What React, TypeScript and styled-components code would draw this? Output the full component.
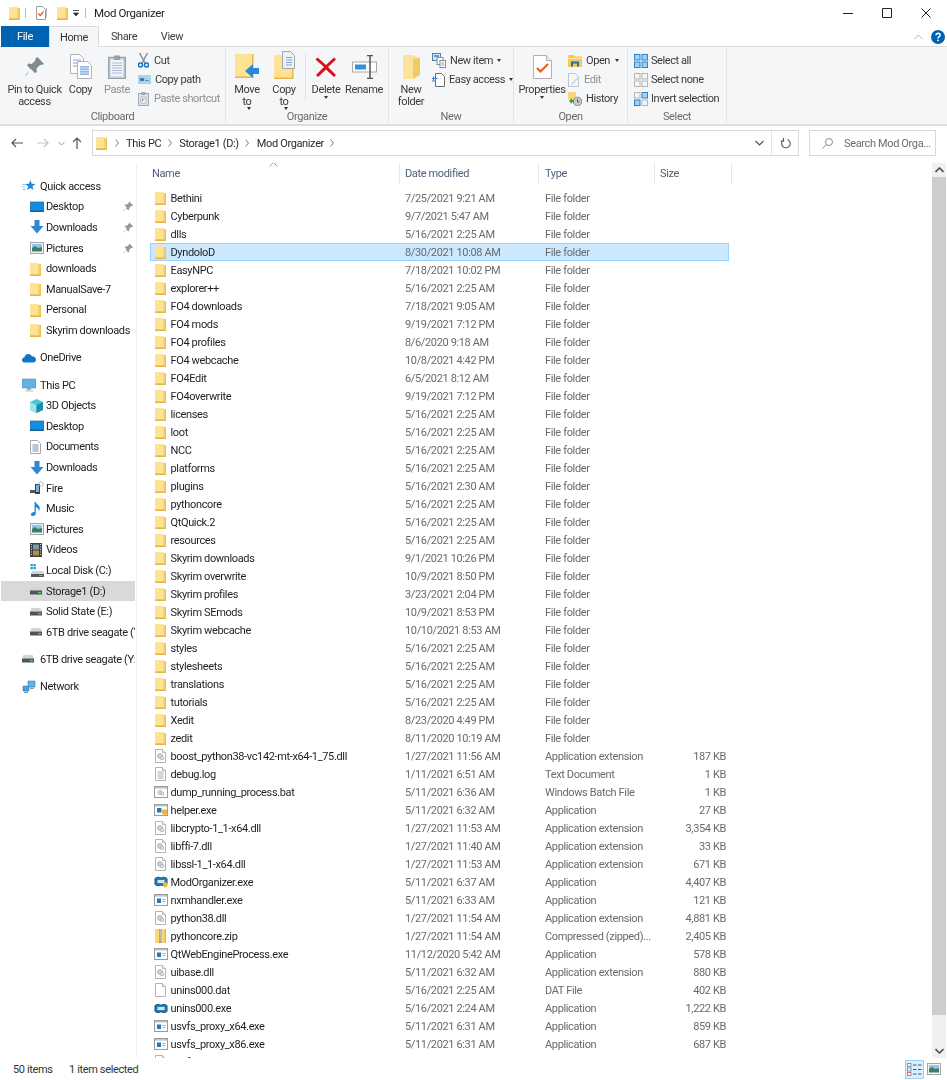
import React from "react";
import styled, { createGlobalStyle } from "styled-components";

const Global = createGlobalStyle`
  html, body { margin: 0; padding: 0; background: #fff; overflow: hidden; }
  body { font-family: Roboto, "Liberation Sans", sans-serif; font-size: 11px; color: #1f1f1f; }
  svg { display: block; flex: none; }
`;

const Window = styled.div`
  width: 947px; height: 1080px; display: flex; flex-direction: column; overflow: hidden;
  filter: blur(0.4px);
  letter-spacing: -0.36px;
  white-space: nowrap;
`;

/* title bar */
const TitleBar = styled.div`
  height: 26px; display: flex; align-items: center; padding: 0 2px 0 9px; flex: none;
`;
const QuickSep = styled.div`
  width: 1px; height: 10px; background: #bdbdbd; margin: 0 10px 0 ${p => p.$left ?? 7}px;
`;
const TitleText = styled.span` margin-left: 2px; font-size: 11.5px; color: #222; flex: 1; `;
const WinControls = styled.div` display: flex; align-items: center; `;
const WinButton = styled.div`
  width: 39px; height: 26px; display: flex; align-items: center; justify-content: center;
`;

/* tabs */
const TabStrip = styled.div`
  height: 21px; display: flex; align-items: stretch; flex: none; padding-left: 1px; position: relative; z-index: 1;
`;
const FileTab = styled.div`
  width: 48px; background: #0063b1; color: #fff; display: flex; align-items: center; justify-content: center; font-size: 11px;
`;
const Tab = styled.div`
  width: ${p => p.$w}px; display: flex; align-items: center; justify-content: center; font-size: 11px; color: #3c3c3c;
  ${p => p.$active && `
    background: #f5f6f7; border: 1px solid #dadbdc; border-bottom: none; box-sizing: border-box; color: #333;
  `}
`;
const TabRight = styled.div`
  margin-left: auto; display: flex; align-items: center; gap: 8px; padding-right: 2px;
`;

/* ribbon */
const Ribbon = styled.div`
  background: #f5f6f7; border-top: 1px solid #dadbdc; border-bottom: 2px solid #dcdddf; display: flex; flex: none; margin-top: -1px; height: 77px;
`;
const Group = styled.div`
  width: ${p => p.$w}px; box-sizing: border-box; border-right: 1px solid #e3e4e6; margin: 1px 0; padding-top: 1px; display: flex; flex-direction: column;
`;
const GroupBody = styled.div`
  height: 61px; flex: none; display: flex; padding-left: ${p => p.$pad ?? 0}px;
`;
const GroupLabel = styled.div`
  height: 13px; text-align: center; color: #6a6a6a; font-size: 11px; line-height: 13px;
`;
const BigButton = styled.div`
  width: ${p => p.$w}px; display: flex; flex-direction: column; align-items: center; flex: none;
  color: ${p => (p.$dim ? "#8f8f8f" : "#3a3a3a")}; font-size: 11px; line-height: 11.5px; text-align: center;
`;
const BigIcon = styled.div`
  height: 35px; display: flex; align-items: center; justify-content: center;
`;
const Caret = styled.span`
  display: inline-block; width: 0; height: 0; border: 2.5px solid transparent; border-top: 3px solid #333; border-bottom: 0; margin-left: ${p => p.$gap ?? 3}px; vertical-align: 2px;
`;
const VDivider = styled.div`
  width: 1px; height: 46px; background: #e0e1e3; margin: 5px 6px 0 2px; flex: none;
`;
const SmallStack = styled.div`
  display: flex; flex-direction: column; margin-left: ${p => p.$left ?? 0}px; padding-top: 2px;
`;
const SmallButton = styled.div`
  height: 19px; display: flex; align-items: center; gap: ${p => p.$gap ?? 4}px; font-size: 11px; letter-spacing: -0.42px;
  color: ${p => (p.$dim ? "#8f8f8f" : "#3a3a3a")};
`;

/* address row */
const NavBar = styled.div`
  height: 37px; display: flex; align-items: flex-start; flex: none; box-sizing: border-box; padding-top: 4px;
`;
const NavArrows = styled.div`
  width: 92px; height: 26px; display: flex; align-items: center; flex: none; padding-left: 11px; box-sizing: border-box;
`;
const AddressBox = styled.div`
  width: 707px; height: 26px; box-sizing: border-box; border: 1px solid #d9d9d9; display: flex; align-items: center; padding-left: 3px; flex: none;
`;
const Crumb = styled.span` color: #2a2a2a; font-size: 11px; margin: 0 6.5px; `;
const CrumbArrow = styled.div` margin-left: ${p => p.$left ?? 0}px; `;
const AddressEnd = styled.div` margin-left: auto; display: flex; align-items: center; height: 100%; `;
const RefreshCell = styled.div`
  width: 26px; height: 100%; border-left: 1px solid #e3e3e3; display: flex; align-items: center; justify-content: center; margin-left: 7px;
`;
const SearchBox = styled.div`
  width: 127px; height: 26px; box-sizing: border-box; border: 1px solid #d9d9d9; margin-left: 10px; display: flex; align-items: center; padding-left: 12px; gap: 11px; color: #6d6d6d; font-size: 11px; overflow: hidden; flex: none;
`;

/* body */
const Body = styled.div`
  flex: 1; min-height: 0; display: flex; overflow: hidden;
`;
const Sidebar = styled.div`
  width: 137px; box-sizing: border-box; border-right: 1px solid #f0f0f0; padding-top: 13px; overflow: hidden; flex: none;
`;
const NavItem = styled.div`
  height: 20.6px; display: flex; align-items: center; box-sizing: border-box; overflow: hidden;
  padding-left: ${p => (p.$top ? 21 : 29)}px; margin-left: 1px; width: 134px;
  margin-top: ${p => p.$gap ?? 0}px; color: #222; font-size: 11px;
  background: ${p => (p.$selected ? "#d9d9d9" : "transparent")};
`;
const NavIcon = styled.div`
  width: ${p => (p.$top ? 18 : 16)}px; display: flex; justify-content: flex-start; flex: none;
`;
const PinSlot = styled.div` margin-left: auto; padding-right: 1px; `;
const Main = styled.div` flex: 1; min-width: 0; position: relative; overflow: hidden; height: 895px; `;
const Header = styled.div`
  height: 21px; margin-left: 10px; display: grid; grid-template-columns: 253px 139px 116px 77px; width: 585px; color: #4c607a; font-size: 11px;
`;
const HeaderCell = styled.div`
  border-right: 1px solid #e8e8e8; padding-left: ${p => p.$pad ?? 5}px; display: flex; align-items: center; height: 21px;
`;
const SortMark = styled.div` position: absolute; left: 132px; top: -1px; `;
const Rows = styled.div` padding: 5px 0 0 13px; `;
const Row = styled.div`
  width: 579px; height: 18px; box-sizing: border-box; display: grid; grid-template-columns: 250px 139px 116px 74px; align-items: center; font-size: 11px; color: #6a6a6a;
  ${p => p.$selected && "background: #cce8ff; box-shadow: inset 0 0 0 1px #99d1ff;"}
`;
const NameCell = styled.div`
  display: flex; align-items: center; color: #1f1f1f; padding-left: 5px;
`;
const NameIconSlot = styled.div` width: 15.5px; display: flex; justify-content: flex-start; flex: none; `;
const DateCell = styled.div` padding-left: 5px; `;
const TypeCell = styled.div` padding-left: 6px; overflow: hidden; `;
const SizeCell = styled.div` text-align: right; padding-right: 3px; `;

const Scrollbar = styled.div`
  width: 14px; margin-right: 1px; background: #f0f0f0; height: 895px; display: flex; flex-direction: column; flex: none;
`;
const ScrollArrow = styled.div` height: 14px; display: flex; align-items: center; justify-content: center; flex: none; `;
const ScrollTrack = styled.div` flex: 1; `;
const ScrollThumb = styled.div` height: 838px; background: #cdcdcd; `;

const StatusBar = styled.div`
  height: 22px; flex: none; display: flex; align-items: center; font-size: 11px; color: #333; padding-left: 13px; margin-top: -2px; background: #fff; position: relative;
`;
const StatusCount = styled.span` width: 56px; `;
const ViewButtons = styled.div` margin-left: auto; display: flex; align-items: center; padding-right: 4px; `;
const ViewButton = styled.div`
  width: 19px; height: 19px; box-sizing: border-box; display: flex; align-items: center; justify-content: center;
  ${p => p.$on && "background: #d9efff; border: 1px solid #99d1ff;"}
`;

const WideSvg = styled.svg` margin-left: -1px; `;

/* icons */
const Folder = ({ w = 11, h = 14 }: { w?: number; h?: number }) => (
  <svg width={w} height={h} viewBox="0 0 11 14">
    <path d="M0 1h7.5l1 1H11v12H0z" fill="#f0c35a" />
    <path d="M0 1h8.5v11.5H0z" fill="#ffe394" />
    <path d="M0 12.5h11V14H0z" fill="#e9b646" />
    <path d="M9 2v10.5" stroke="#f7d57a" strokeWidth="1" />
  </svg>
);
const FileBase = ({ children, fold = true }: { children?: React.ReactNode; fold?: boolean }) => (
  <svg width="11" height="14" viewBox="0 0 11 14">
    <path d="M.5.5h7l3 3v10H.5z" fill="#fff" stroke="#b4b4b4" />
    {fold && <path d="M7.5.5v3h3" fill="#eee" stroke="#b4b4b4" />}
    {children}
  </svg>
);
const Dll = () => (
  <FileBase>
    <circle cx="5" cy="7" r="2.4" fill="#cfd6dc" stroke="#98a2ab" strokeWidth=".8" />
    <circle cx="7" cy="9" r="1.7" fill="#e2e6e9" stroke="#98a2ab" strokeWidth=".7" />
  </FileBase>
);
const Log = () => (
  <FileBase>
    <path d="M2.5 5h6M2.5 7h6M2.5 9h6M2.5 11h6" stroke="#a5a5a5" strokeWidth=".9" />
  </FileBase>
);
const Blank = () => <FileBase />;
const ExeBox = ({ children }: { children?: React.ReactNode }) => (
  <WideSvg width="14" height="12" viewBox="0 0 14 12">
    <rect x=".5" y=".5" width="13" height="11" fill="#fff" stroke="#9a9a9a" />
    <path d="M1 1h12v1.6H1z" fill="#c5c5c5" />
    {children}
  </WideSvg>
);
const Exe = () => (
  <ExeBox>
    <rect x="3" y="4.5" width="4" height="4.5" fill="#1e78d2" />
    <path d="M8.5 5.5h3M8.5 7.5h3" stroke="#aaa" />
  </ExeBox>
);
const Bat = () => (
  <ExeBox>
    <circle cx="6" cy="6.5" r="2" fill="#d5dade" stroke="#9aa5ad" strokeWidth=".7" />
    <circle cx="8.5" cy="7.6" r="1.5" fill="#e5e8ea" stroke="#9aa5ad" strokeWidth=".7" />
  </ExeBox>
);
const HelperExe = () => (
  <ExeBox>
    <rect x="3" y="4" width="4.5" height="4.5" fill="#1e78d2" />
    <path d="M8 6l2.5-1L13 6v2.5c0 1.5-1.2 2.7-2.5 3.2C9.2 11.200 8 10 8 8.500z" fill="#f2b632" />
  </ExeBox>
);
const ModOrg = () => (
  <WideSvg width="14" height="12" viewBox="0 0 14 12">
    <path d="M1 2.5c2-1.600 4-1.600 6-.5 2-1.100 4-1.100 6 .5v6c-2 1.500-4 1.500-6 .5-2 1-4 1-6-.5z" fill="#1f7fbb" stroke="#1b4f72" strokeWidth="1" />
    <path d="M3.500 4h7v3h-7z" fill="#cfe8f7" />
    <path d="M9 7l2-1 2.500 1v2c0 1.300-1.200 2.300-2.300 2.700C10 11.300 9 10.300 9 9z" fill="#f2b632" />
  </WideSvg>
);
const UninsExe = () => (
  <WideSvg width="14" height="9" viewBox="0 0 14 9">
    <path d="M1 1.500c2-1.300 4-1.300 6-.3 2-1 4-1 6 .3v6c-2 1.300-4 1.300-6 .3-2 1-4 1-6-.3z" fill="#1f7fbb" stroke="#1b4f72" strokeWidth="1" />
    <path d="M3.500 3h7v3h-7z" fill="#cfe8f7" />
  </WideSvg>
);
const Zip = () => (
  <svg width="11" height="14" viewBox="0 0 11 14">
    <path d="M0 0h11v14H0z" fill="#fbd976" />
    <path d="M9.500 0H11v14H9.500z" fill="#e9b646" />
    <path d="M4 0h2.500v14H4z" fill="#9d9d8a" />
    <path d="M4.600 1h1.300M4.600 3h1.300M4.600 5h1.300M4.600 7h1.300M4.600 9h1.300M4.600 11h1.300" stroke="#e8e8dc" />
  </svg>
);

const SmallPin = () => (
  <svg width="11" height="11" viewBox="0 0 11 11">
    <path d="M6.500.8l3.700 3.700-1.200.6-.9-.2-2 2 .1 1.700-.9.8-2.200-2.200L.6 10.400.300 10.100l3.400-3.600L1.600 4.300l.8-.9 1.700.1 2-2-.2-.9z" fill="#8e9aa3" />
  </svg>
);
const Star = () => (
  <svg width="14" height="14" viewBox="0 0 14 14">
    <path d="M8.500 1l1.200 3.700 3.800.2-3 2.400 1 3.700L8.300 9l-3.200 2 1-3.700-3-2.400 3.900-.2z" fill="#1f89d8" />
    <path d="M.5 5.500h3M0 8h3M1 10.500h2.500" stroke="#8ec6ee" />
  </svg>
);
const Desktop = () => (
  <svg width="14" height="12" viewBox="0 0 14 12">
    <rect x="0" y="1" width="14" height="9.500" fill="#0f8fe0" />
    <rect x="0" y="1" width="14" height="9.500" fill="none" stroke="#3f5f78" strokeWidth=".7" />
    <path d="M0 9.500h14v1.500H0z" fill="#1d5f8e" />
  </svg>
);
const Download = () => (
  <svg width="14" height="14" viewBox="0 0 14 14">
    <path d="M4.500 0h5v6h4L7 13.500.500 6h4z" fill="#2f86d6" />
  </svg>
);
const Pictures = () => (
  <svg width="14" height="12" viewBox="0 0 14 12">
    <rect x=".5" y=".5" width="13" height="11" fill="#f4f4f4" stroke="#a5a5a5" />
    <path d="M2 2h10v4H2z" fill="#8fc7ea" />
    <path d="M2 6l3-2 3 2 4-1v4.500H2z" fill="#3f7d6a" />
  </svg>
);
const OneDrive = () => (
  <svg width="14" height="10" viewBox="0 0 14 10">
    <path d="M3 9.500C1 9.500 0 8.200 0 6.900c0-1.400 1-2.400 2.300-2.500C2.900 2.200 4.500 1 6.300 1c1.600 0 2.900.9 3.500 2.300 2.300-.1 4.200 1.400 4.200 3.400 0 1.600-1.200 2.800-2.900 2.800z" fill="#1276c4" />
  </svg>
);
const Pc = () => (
  <svg width="14" height="14" viewBox="0 0 14 14">
    <rect x="0" y="1" width="14" height="9" fill="#5db4e6" stroke="#7a8a96" strokeWidth=".6" />
    <path d="M5 10h4v2H5z" fill="#9aa5ad" />
    <path d="M3 12.500h8V13.500H3z" fill="#b5bcc2" />
  </svg>
);
const Cube = () => (
  <svg width="13" height="14" viewBox="0 0 13 14">
    <path d="M6.500 0L13 3v8l-6.500 3L0 11V3z" fill="#4bc3d9" />
    <path d="M6.500 6v8L0 11V3z" fill="#9fe3ea" />
    <path d="M6.500 6L13 3v8l-6.500 3z" fill="#1b8fa8" />
  </svg>
);
const Documents = () => (
  <svg width="11" height="14" viewBox="0 0 11 14">
    <path d="M.5.500h7l3 3v10H.5z" fill="#fff" stroke="#a8a8a8" />
    <path d="M2.500 5h6M2.500 7h6M2.500 9h6M2.500 11h6" stroke="#6f8fb0" />
  </svg>
);
const Phone = () => (
  <svg width="14" height="14" viewBox="0 0 14 14">
    <path d="M5 3h5v10H5z" fill="#3b3f44" />
    <path d="M6 4h3v7H6z" fill="#6fb2e2" />
    <path d="M0 9h5v3H0z" fill="#555" />
    <circle cx="11" cy="3" r="2.300" fill="none" stroke="#aaa" strokeWidth=".8" />
  </svg>
);
const Music = () => (
  <svg width="12" height="14" viewBox="0 0 12 14">
    <path d="M4.500 0h1.300c.4 2.400 4 3 4 6.500 0 1.200-.5 2-1 2.700.2-2-1-3.400-3-3.900V11.500c0 1.400-1.400 2.500-3 2.500S1 13.200 1 12.200c0-1.200 1.400-2.200 3-2.200.2 0 .4 0 .5.100z" fill="#1d8ae0" />
  </svg>
);
const Video = () => (
  <svg width="12" height="14" viewBox="0 0 12 14">
    <rect width="12" height="14" fill="#3d4044" />
    <path d="M3 1.500h6v5H3z" fill="#7b9cb5" />
    <path d="M3 7.500h6v5H3z" fill="#b0903a" />
    <path d="M1 1.500h1M1 4h1M1 6.500h1M1 9h1M1 11.500h1M10 1.500h1M10 4h1M10 6.500h1M10 9h1M10 11.500h1" stroke="#ddd" />
  </svg>
);
const DiskC = () => (
  <svg width="14" height="13" viewBox="0 0 14 13">
    <path d="M.500 0h2.300v2.300H.500zM3.500 0h2.300v2.300H3.500zM.500 3h2.300v2.300H.500zM3.500 3h2.300v2.300H3.500z" fill="#1d9bd8" />
    <path d="M2 7h11l1 3H1z" fill="#cfd3d6" />
    <path d="M1 10h13v3H1z" fill="#50565b" />
    <path d="M9 11h3.500v1H9z" fill="#5ecb5e" />
  </svg>
);
const Disk = ({ w = 12 }: { w?: number }) => (
  <svg width={w} height="8" viewBox="0 0 12 8">
    <path d="M1.500 0h9L12 3.500H0z" fill="#d2d5d8" />
    <path d="M0 3.500h12V7.500H0z" fill="#4f555a" />
    <path d="M8 5h3v1.200H8z" fill="#5ecb5e" />
  </svg>
);
const Network = () => (
  <svg width="14" height="14" viewBox="0 0 14 14">
    <path d="M1 6h6v5H1z" fill="#4aa3e0" stroke="#2f6e9e" strokeWidth=".5" />
    <path d="M2 11.500h4v1.500H2z" fill="#8d989f" />
    <path d="M6 1h7v6H6z" fill="#5db4e6" stroke="#2f6e9e" strokeWidth=".5" />
    <path d="M8 7.500h4V9H8z" fill="#8d989f" />
  </svg>
);

/* ribbon icons */
const RibbonPin = () => (
  <svg width="20" height="21" viewBox="0 0 20 21">
    <path d="M12.500 1L19 8l-2.300 1.100-1.500-.3-3.700 3.700.3 3.200-1.600 1.500L6 13 1 19.500l-.6-.6L6 13.500 2 9.200l1.500-1.600 3.300.3L10.500 4.200l-.2-1.600z" fill="#7f8a93" />
  </svg>
);
const RibbonCopy = () => (
  <svg width="22" height="25" viewBox="0 0 22 25">
    <path d="M.5.500h9l4 4v15H.500z" fill="#fdfdfd" stroke="#b2b2b2" />
    <path d="M3 6h8M3 9h8M3 12h8" stroke="#7fa6d4" />
    <path d="M7.500 7.500h10l4 4v13h-14z" fill="#fff" stroke="#b2b2b2" />
    <path d="M10 12h9v9h-9z" fill="#8fb4e8" />
    <path d="M10 14h9M10 16.500h9M10 19h9" stroke="#fff" strokeWidth=".7" />
  </svg>
);
const RibbonPaste = () => (
  <svg width="18" height="24" viewBox="0 0 18 24">
    <rect x=".7" y="2.500" width="16.600" height="21" fill="#d3dbe3" stroke="#96a0aa" strokeWidth="1.400" />
    <rect x="3" y="5" width="12" height="16" fill="#f3f5f8" />
    <path d="M4 8h10M4 10.500h10M4 13h10M4 15.500h10M4 18h10" stroke="#a7bbd6" />
    <path d="M6 .5h6V5H6z" fill="#96a0aa" />
  </svg>
);
const Cut = () => (
  <svg width="11" height="15" viewBox="0 0 11 15">
    <path d="M1.500 0L7 10M9.500 0L4 10" stroke="#8a8f94" strokeWidth="1.500" fill="none" />
    <circle cx="2.500" cy="12" r="2" fill="none" stroke="#1672c0" strokeWidth="1.500" />
    <circle cx="8.500" cy="12" r="2" fill="none" stroke="#1672c0" strokeWidth="1.500" />
  </svg>
);
const CopyPath = () => (
  <svg width="13" height="9" viewBox="0 0 13 9">
    <rect width="13" height="9" fill="#a8d4f2" />
    <path d="M2 3l1 3 1-3 1 3 1-3" fill="none" stroke="#2b4f6e" strokeWidth=".8" />
    <path d="M7.500 5.500h4" stroke="#2b4f6e" strokeDasharray="1 1" />
  </svg>
);
const PasteShortcut = () => (
  <svg width="11" height="14" viewBox="0 0 11 14">
    <rect x=".5" y="1.500" width="10" height="12" fill="#dfe4ea" stroke="#a0a9b2" />
    <path d="M3.500 0h4v3h-4z" fill="#a0a9b2" />
    <rect x="3" y="5" width="5" height="6" fill="#fff" stroke="#8a98a6" strokeWidth=".6" />
    <path d="M4.500 9.500V7h2M6.500 7L5 8.500" fill="none" stroke="#5d7ea0" strokeWidth=".7" />
  </svg>
);
const MoveTo = () => (
  <svg width="24" height="28" viewBox="0 0 24 28">
    <path d="M0 1h18v24H0z" fill="#ffe394" />
    <path d="M17 1h1.500v24H0v-1.500h17z" fill="#e9b646" />
    <path d="M10 18l8-7v4h6v6h-6v4z" fill="#2f86d6" />
  </svg>
);
const CopyTo = () => (
  <svg width="21" height="31" viewBox="0 0 21 31">
    <path d="M0 4h19v24H0z" fill="#ffe394" />
    <path d="M18 4h1.500v24H0v-1.500h18z" fill="#e9b646" />
    <path d="M8.500.5h8l4 4v13h-12z" fill="#eef1f4" stroke="#a5a5a5" />
    <path d="M12 6.500h6M12 9h6M12 11.500h6M12 14h6" fill="none" stroke="#7fa6d4" />
  </svg>
);
const Delete = () => (
  <svg width="22" height="22" viewBox="0 0 22 22">
    <path d="M2.500 1.500L11 9l8-7.500 2 2L13 11l8 8-2 2-8-7.500L3 21l-2-2 8-8L.500 3.500z" fill="#d90f1e" />
  </svg>
);
const Rename = () => (
  <svg width="25" height="24" viewBox="0 0 25 24">
    <rect x=".5" y="7" width="24" height="10" fill="#fdfdfd" stroke="#a8a8a8" />
    <rect x="3" y="9.500" width="11" height="5" fill="#2f8fe0" />
    <path d="M15 .7h6M15 23.300h6" fill="none" stroke="#555" strokeWidth="1.200" />
    <path d="M18 1v22" stroke="#555" strokeWidth="1.500" />
  </svg>
);
const NewFolder = () => (
  <svg width="17" height="24" viewBox="0 0 17 24">
    <path d="M0 0h10l7 3v17l-7 4H0z" fill="#fce29a" />
    <path d="M10 4l7-1v17l-7 4z" fill="#f1c969" />
  </svg>
);
const NewItem = () => (
  <svg width="14" height="15" viewBox="0 0 14 15">
    <rect x=".5" y=".5" width="8" height="7" fill="#d9ebf8" stroke="#5a7f9e" />
    <path d="M2 3h5" stroke="#2f86d6" strokeWidth="1.500" />
    <rect x="5" y="4.500" width="6" height="7" fill="#fff" stroke="#8a8a8a" />
    <rect x="8" y="7.500" width="5.500" height="7" fill="#fff" stroke="#8a8a8a" />
    <path d="M9.500 10h2.500M9.500 12h2.500" stroke="#6f8fb0" />
  </svg>
);
const EasyAccess = () => (
  <svg width="13" height="14" viewBox="0 0 13 14">
    <path d="M3.500.500h6l3 3v10h-9z" fill="#fff" stroke="#6a6a6a" />
    <path d="M0 5.500h5.500M1.500 3.500v4M0 8h3.500" stroke="#2f86d6" strokeWidth="1" fill="none" />
  </svg>
);
const Properties = () => (
  <svg width="19" height="24" viewBox="0 0 19 24">
    <path d="M.5.500h13l5 5v18H.500z" fill="#fdfdfd" stroke="#b0b0b0" />
    <path d="M13.500.500v5h5" fill="#eee" stroke="#b0b0b0" />
    <path d="M4 13l3.500 3.500L15 9" fill="none" stroke="#e8591f" strokeWidth="2" />
  </svg>
);
const OpenIcon = () => (
  <svg width="14" height="12" viewBox="0 0 14 12">
    <path d="M0 0h6l1 1.500h7V12H0z" fill="#f8c94f" />
    <path d="M0 3h14v1H0z" fill="#fdeab0" />
    <path d="M3 11.500V6.500h8V11.500H9V8.500H5V11.500z" fill="#1672c0" />
  </svg>
);
const Edit = () => (
  <svg width="12" height="14" viewBox="0 0 12 14">
    <path d="M.5.500h7l3 3v10H.500z" fill="#f6f7f9" stroke="#b9c5d2" />
    <path d="M3 11l6.500-7 1 1-6 7z" fill="#c9d7e6" />
  </svg>
);
const History = () => (
  <svg width="14" height="14" viewBox="0 0 14 14">
    <path d="M0 0h8v8H0z" fill="#f8d874" />
    <circle cx="9.500" cy="9.500" r="4.300" fill="#c9c9c9" stroke="#777" strokeWidth=".8" />
    <path d="M9.500 7v3h2" fill="none" stroke="#444" strokeWidth=".8" />
    <path d="M1 9l3-3v2h2v2H4v2z" fill="#37a13a" />
  </svg>
);
const Tiles = ({ on }: { on: boolean[] }) => (
  <svg width="14" height="14" viewBox="0 0 14 14">
    {[[0, 0], [7.5, 0], [0, 7.500], [7.500, 7.500]].map(([x, y], i) => (
      <rect
        key={i}
        x={x + 0.5}
        y={y + 0.5}
        width="5.500"
        height="5.500"
        fill={on[i] ? "#9fd0f5" : "#f5f6f7"}
        stroke={on[i] ? "#2a86d3" : "#b5b5b5"}
      />
    ))}
  </svg>
);
const Check = () => (
  <svg width="10" height="14" viewBox="0 0 10 14">
    <path d="M.5.500h6l3 3v10h-9z" fill="#fff" stroke="#9c9c9c" />
    <path d="M2.200 7.500l2 2 3.300-4" fill="none" stroke="#e8591f" strokeWidth="1.200" />
  </svg>
);

/* chrome glyphs */
const Line = ({ d, w = 12, h = 12, color = "#444", sw = 1.2 }: { d: string; w?: number; h?: number; color?: string; sw?: number }) => (
  <svg width={w} height={h} viewBox={`0 0 ${w} ${h}`}>
    <path d={d} fill="none" stroke={color} strokeWidth={sw} />
  </svg>
);
const Help = () => (
  <svg width="14" height="14" viewBox="0 0 14 14">
    <circle cx="7" cy="7" r="7" fill="#0063b1" />
    <path d="M5 5.300C5 4 6 3.300 7.100 3.300c1.200 0 2 .8 2 1.800 0 1.700-2.100 1.600-2.100 3.300" fill="none" stroke="#fff" strokeWidth="1.500" />
    <rect x="6.200" y="9.600" width="1.600" height="1.600" fill="#fff" />
  </svg>
);
const DetailsGlyph = () => (
  <svg width="15" height="13" viewBox="0 0 15 13">
    <rect x=".5" y=".5" width="3.500" height="3" fill="#fff" stroke="#7f97b0" />
    <rect x=".5" y="5" width="3.500" height="3" fill="#fff" stroke="#7f97b0" />
    <rect x=".5" y="9.500" width="3.500" height="3" fill="#fff" stroke="#d37a7a" />
    <path d="M6 2h3.500M11 2h3.500M6 6.500h3.500M11 6.500h3.500M6 11h3.500M11 11h3.500" stroke="#555" />
  </svg>
);

type Item = { name: string; date: string; type: string; size?: string; icon?: React.ReactNode; selected?: boolean };
const FF = "File folder";
const AE = "Application extension";
const AP = "Application";
const M = "5/16/2021 2:25 AM";

const folders: [string, string][] = [
  ["Bethini", "7/25/2021 9:21 AM"],
  ["Cyberpunk", "9/7/2021 5:47 AM"],
  ["dlls", M],
  ["DyndoloD", "8/30/2021 10:08 AM"],
  ["EasyNPC", "7/18/2021 10:02 PM"],
  ["explorer++", M],
  ["FO4 downloads", "7/18/2021 9:05 AM"],
  ["FO4 mods", "9/19/2021 7:12 PM"],
  ["FO4 profiles", "8/6/2020 9:18 AM"],
  ["FO4 webcache", "10/8/2021 4:42 PM"],
  ["FO4Edit", "6/5/2021 8:12 AM"],
  ["FO4overwrite", "9/19/2021 7:12 PM"],
  ["licenses", M],
  ["loot", M],
  ["NCC", M],
  ["platforms", M],
  ["plugins", "5/16/2021 2:30 AM"],
  ["pythoncore", M],
  ["QtQuick.2", M],
  ["resources", M],
  ["Skyrim downloads", "9/1/2021 10:26 PM"],
  ["Skyrim overwrite", "10/9/2021 8:50 PM"],
  ["Skyrim profiles", "3/23/2021 2:04 PM"],
  ["Skyrim SEmods", "10/9/2021 8:53 PM"],
  ["Skyrim webcache", "10/10/2021 8:53 AM"],
  ["styles", M],
  ["stylesheets", M],
  ["translations", M],
  ["tutorials", M],
  ["Xedit", "8/23/2020 4:49 PM"],
  ["zedit", "8/11/2020 10:19 AM"],
];

const files: Item[] = [
  { name: "boost_python38-vc142-mt-x64-1_75.dll", date: "1/27/2021 11:56 AM", type: AE, size: "187 KB", icon: <Dll /> },
  { name: "debug.log", date: "1/11/2021 6:51 AM", type: "Text Document", size: "1 KB", icon: <Log /> },
  { name: "dump_running_process.bat", date: "5/11/2021 6:36 AM", type: "Windows Batch File", size: "1 KB", icon: <Bat /> },
  { name: "helper.exe", date: "5/11/2021 6:32 AM", type: AP, size: "27 KB", icon: <HelperExe /> },
  { name: "libcrypto-1_1-x64.dll", date: "1/27/2021 11:53 AM", type: AE, size: "3,354 KB", icon: <Dll /> },
  { name: "libffi-7.dll", date: "1/27/2021 11:40 AM", type: AE, size: "33 KB", icon: <Dll /> },
  { name: "libssl-1_1-x64.dll", date: "1/27/2021 11:53 AM", type: AE, size: "671 KB", icon: <Dll /> },
  { name: "ModOrganizer.exe", date: "5/11/2021 6:37 AM", type: AP, size: "4,407 KB", icon: <ModOrg /> },
  { name: "nxmhandler.exe", date: "5/11/2021 6:33 AM", type: AP, size: "121 KB", icon: <Exe /> },
  { name: "python38.dll", date: "1/27/2021 11:54 AM", type: AE, size: "4,881 KB", icon: <Dll /> },
  { name: "pythoncore.zip", date: "1/27/2021 11:54 AM", type: "Compressed (zipped)...", size: "2,405 KB", icon: <Zip /> },
  { name: "QtWebEngineProcess.exe", date: "11/12/2020 5:42 AM", type: AP, size: "578 KB", icon: <Exe /> },
  { name: "uibase.dll", date: "5/11/2021 6:32 AM", type: AE, size: "880 KB", icon: <Dll /> },
  { name: "unins000.dat", date: "5/16/2021 2:25 AM", type: "DAT File", size: "402 KB", icon: <Blank /> },
  { name: "unins000.exe", date: "5/16/2021 2:24 AM", type: AP, size: "1,222 KB", icon: <UninsExe /> },
  { name: "usvfs_proxy_x64.exe", date: "5/11/2021 6:31 AM", type: AP, size: "859 KB", icon: <Exe /> },
  { name: "usvfs_proxy_x86.exe", date: "5/11/2021 6:31 AM", type: AP, size: "687 KB", icon: <Exe /> },
  { name: "usvfs_x64.dll", date: "5/11/2021 6:31 AM", type: AE, size: "1,213 KB", icon: <Dll /> },
];

const items: Item[] = [
  ...folders.map(([name, date]) => ({ name, date, type: FF, icon: <Folder />, selected: name === "DyndoloD" })),
  ...files,
];

type Nav = { label: string; icon: React.ReactNode; top?: boolean; gap?: number; pin?: boolean; selected?: boolean };
const navItems: Nav[] = [
  { label: "Quick access", icon: <Star />, top: true },
  { label: "Desktop", icon: <Desktop />, pin: true },
  { label: "Downloads", icon: <Download />, pin: true },
  { label: "Pictures", icon: <Pictures />, pin: true },
  { label: "downloads", icon: <Folder /> },
  { label: "ManualSave-7", icon: <Folder /> },
  { label: "Personal", icon: <Folder /> },
  { label: "Skyrim downloads", icon: <Folder /> },
  { label: "OneDrive", icon: <OneDrive />, top: true, gap: 6.5 },
  { label: "This PC", icon: <Pc />, top: true, gap: 7 },
  { label: "3D Objects", icon: <Cube /> },
  { label: "Desktop", icon: <Desktop /> },
  { label: "Documents", icon: <Documents /> },
  { label: "Downloads", icon: <Download /> },
  { label: "Fire", icon: <Phone /> },
  { label: "Music", icon: <Music /> },
  { label: "Pictures", icon: <Pictures /> },
  { label: "Videos", icon: <Video /> },
  { label: "Local Disk (C:)", icon: <DiskC /> },
  { label: "Storage1 (D:)", icon: <Disk />, selected: true },
  { label: "Solid State (E:)", icon: <Disk /> },
  { label: "6TB drive seagate (Y:)", icon: <Disk /> },
  { label: "6TB drive seagate (Y:)", icon: <Disk />, top: true, gap: 6.5 },
  { label: "Network", icon: <Network />, top: true, gap: 7 },
];

export default function App() {
  return (
    <Window>
      <Global />
      <TitleBar>
        <Folder w={11} h={14} />
        <QuickSep $left={5} />
        <Check />
        <QuickSep $left={0} />
        <Folder w={11} h={14} />
        <svg width="24" height="12" viewBox="0 0 24 12">
          <path d="M5 3.500h6M5.500 6l2.500 3 2.500-3z" stroke="#333" fill="#333" strokeWidth=".8" />
          <path d="M17.500 1v10" stroke="#bdbdbd" />
        </svg>
        <TitleText>Mod Organizer</TitleText>
        <WinControls>
          <WinButton><Line w={10} h={10} d="M0 5.500h10" color="#222" sw={1} /></WinButton>
          <WinButton><Line w={10} h={10} d="M.5.500h9v9h-9z" color="#222" sw={1} /></WinButton>
          <WinButton><Line w={10} h={10} d="M.5.500l9 9M9.500.500l-9 9" color="#222" sw={1} /></WinButton>
        </WinControls>
      </TitleBar>
      <TabStrip>
        <FileTab>File</FileTab>
        <Tab $active $w={50}>Home</Tab>
        <Tab $w={50}>Share</Tab>
        <Tab $w={46}>View</Tab>
        <TabRight>
          <Line w={9} h={6} d="M.5 5l4-4 4 4" color="#b5b5b5" sw={1} />
          <Help />
        </TabRight>
      </TabStrip>
      <Ribbon>
        <Group $w={226}>
          <GroupBody $pad={7}>
            <BigButton $w={55}><BigIcon><RibbonPin /></BigIcon>Pin to Quick<br />access</BigButton>
            <BigButton $w={37}><BigIcon><RibbonCopy /></BigIcon>Copy</BigButton>
            <BigButton $w={36} $dim><BigIcon><RibbonPaste /></BigIcon>Paste</BigButton>
            <SmallStack $left={3}>
              <SmallButton $gap={5}><Cut />Cut</SmallButton>
              <SmallButton $gap={4}><CopyPath />Copy path</SmallButton>
              <SmallButton $gap={5} $dim><PasteShortcut />Paste shortcut</SmallButton>
            </SmallStack>
          </GroupBody>
          <GroupLabel>Clipboard</GroupLabel>
        </Group>
        <Group $w={163}>
          <GroupBody $pad={3}>
            <BigButton $w={36}><BigIcon><MoveTo /></BigIcon>Move<br />to<Caret /></BigButton>
            <BigButton $w={38}><BigIcon><CopyTo /></BigIcon>Copy<br />to<Caret /></BigButton>
            <VDivider />
            <BigButton $w={28}><BigIcon><Delete /></BigIcon>Delete<br /><Caret $gap={0} /></BigButton>
            <BigButton $w={48}><BigIcon><Rename /></BigIcon>Rename</BigButton>
          </GroupBody>
          <GroupLabel>Organize</GroupLabel>
        </Group>
        <Group $w={125}>
          <GroupBody $pad={7}>
            <BigButton $w={30}><BigIcon><NewFolder /></BigIcon>New<br />folder</BigButton>
            <SmallStack $left={6}>
              <SmallButton $gap={4}><NewItem />New item<Caret $gap={0} /></SmallButton>
              <SmallButton $gap={4}><EasyAccess />Easy access<Caret $gap={0} /></SmallButton>
            </SmallStack>
          </GroupBody>
          <GroupLabel>New</GroupLabel>
        </Group>
        <Group $w={114}>
          <GroupBody $pad={5}>
            <BigButton $w={46}><BigIcon><Properties /></BigIcon>Properties<br /><Caret $gap={0} /></BigButton>
            <SmallStack $left={3}>
              <SmallButton><OpenIcon />Open<Caret $gap={1} /></SmallButton>
              <SmallButton $dim><Edit />Edit</SmallButton>
              <SmallButton><History />History</SmallButton>
            </SmallStack>
          </GroupBody>
          <GroupLabel>Open</GroupLabel>
        </Group>
        <Group $w={99}>
          <GroupBody $pad={6}>
            <SmallStack>
              <SmallButton $gap={3}><Tiles on={[true, true, true, true]} />Select all</SmallButton>
              <SmallButton $gap={3}><Tiles on={[false, false, false, false]} />Select none</SmallButton>
              <SmallButton $gap={3}><Tiles on={[false, true, true, false]} />Invert selection</SmallButton>
            </SmallStack>
          </GroupBody>
          <GroupLabel>Select</GroupLabel>
        </Group>
      </Ribbon>
      <NavBar>
        <NavArrows>
          <Line w={12} h={10} d="M12 5H1M5 1L1 5l4 4" color="#555" sw={1.2} />
          <CrumbArrow $left={14}><Line w={12} h={10} d="M0 5h11M7 1l4 4-4 4" color="#c4c4c4" sw={1.2} /></CrumbArrow>
          <CrumbArrow $left={9}><Line w={7} h={5} d="M.5 1l3 3 3-3" color="#999" sw={1} /></CrumbArrow>
          <CrumbArrow $left={7}><Line w={10} h={12} d="M5 12V1M1 5l4-4 4 4" color="#555" sw={1.2} /></CrumbArrow>
        </NavArrows>
        <AddressBox>
          <Folder w={11} h={14} />
          <CrumbArrow $left={7.5}><Line w={5} h={8} d="M.5.500l3 3.500-3 3.500" color="#777" sw={1} /></CrumbArrow>
          <Crumb>This PC</Crumb>
          <Line w={5} h={8} d="M.5.500l3 3.500-3 3.500" color="#777" sw={1} />
          <Crumb>Storage1 (D:)</Crumb>
          <Line w={5} h={8} d="M.5.500l3 3.500-3 3.500" color="#777" sw={1} />
          <Crumb>Mod Organizer</Crumb>
          <Line w={5} h={8} d="M.5.500l3 3.500-3 3.500" color="#777" sw={1} />
          <AddressEnd>
            <Line w={9} h={6} d="M.5 1l4 4 4-4" color="#555" sw={1.2} />
            <RefreshCell>
              <Line w={11} h={11} d="M7.500 1.500A4.300 4.300 0 1 1 3 2.300M3.500 0v3H.7" color="#555" sw={1.100} />
            </RefreshCell>
          </AddressEnd>
        </AddressBox>
        <SearchBox>
          <Line w={11} h={11} d="M10.500 4a3.500 3.500 0 1 1-7 0 3.500 3.500 0 0 1 7 0zM4.500 6.500L.5 10.500" color="#8a8a8a" sw={1} />
          Search Mod Orga...
        </SearchBox>
      </NavBar>
      <Body>
        <Sidebar>
          {navItems.map((n, i) => (
            <NavItem key={i} $top={n.top} $gap={n.gap} $selected={n.selected}>
              <NavIcon $top={n.top}>{n.icon}</NavIcon>
              {n.label}
              {n.pin && <PinSlot><SmallPin /></PinSlot>}
            </NavItem>
          ))}
        </Sidebar>
        <Main>
          <Header>
            <HeaderCell>Name</HeaderCell>
            <HeaderCell>Date modified</HeaderCell>
            <HeaderCell $pad={6}>Type</HeaderCell>
            <HeaderCell>Size</HeaderCell>
          </Header>
          <SortMark><Line w={9} h={5} d="M.5 4.500l4-4 4 4" color="#a0a0a0" sw={1} /></SortMark>
          <Rows>
            {items.map(it => (
              <Row key={it.name} $selected={it.selected}>
                <NameCell>
                  <NameIconSlot>{it.icon}</NameIconSlot>
                  {it.name}
                </NameCell>
                <DateCell>{it.date}</DateCell>
                <TypeCell>{it.type}</TypeCell>
                <SizeCell>{it.size}</SizeCell>
              </Row>
            ))}
          </Rows>
        </Main>
        <Scrollbar>
          <ScrollArrow><Line w={9} h={6} d="M.5 5l4-4 4 4" color="#505050" sw={1.600} /></ScrollArrow>
          <ScrollThumb />
          <ScrollTrack />
          <ScrollArrow><Line w={9} h={6} d="M.5 1l4 4 4-4" color="#505050" sw={1.600} /></ScrollArrow>
        </Scrollbar>
      </Body>
      <StatusBar>
        <StatusCount>50 items</StatusCount>
        1 item selected
        <ViewButtons>
          <ViewButton $on><DetailsGlyph /></ViewButton>
          <ViewButton><Pictures /></ViewButton>
        </ViewButtons>
      </StatusBar>
    </Window>
  );
}
